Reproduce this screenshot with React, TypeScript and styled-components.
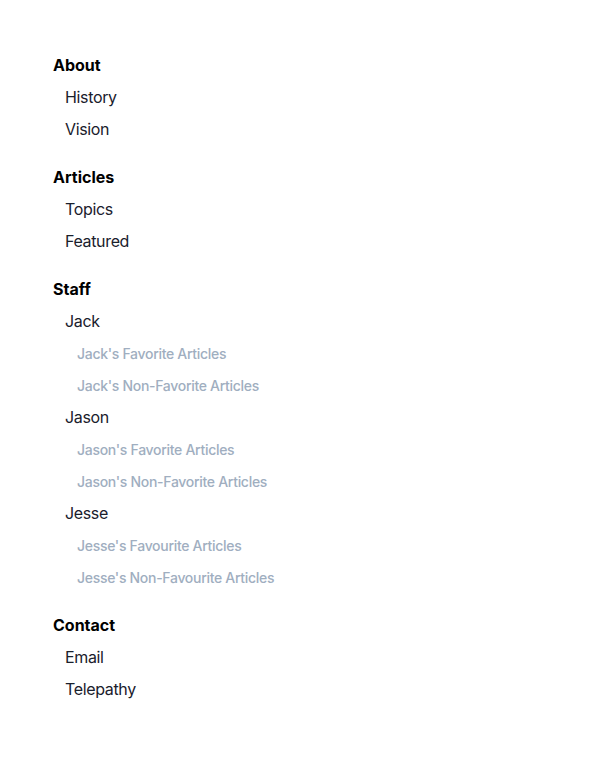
import React from "react";
import styled, { createGlobalStyle } from "styled-components";

const Global = createGlobalStyle`
  html, body { margin: 0; padding: 0; background: #fff; }
  body { font-family: Inter, "Noto Sans", sans-serif; -webkit-font-smoothing: antialiased; }
`;

const Nav = styled.nav`
  padding: 49px 53px;
  display: flex;
  flex-direction: column;
  gap: 16px;
`;

const Section = styled.div`
  display: flex;
  flex-direction: column;
`;

const Heading = styled.div`
  font-size: 16px;
  font-weight: 700;
  line-height: 32px;
  color: #000;
`;

const Item = styled.div<{ $level: number }>`
  padding-left: ${(p) => (p.$level === 1 ? 12 : 24)}px;
  padding-top: ${(p) => (p.$level === 1 ? 0 : 2)}px;
  font-size: ${(p) => (p.$level === 1 ? 16 : 14)}px;
  line-height: ${(p) => (p.$level === 1 ? 32 : 30)}px;
  letter-spacing: ${(p) => (p.$level === 1 ? -0.35 : -0.3)}px;
  color: ${(p) => (p.$level === 1 ? "#1a202c" : "#a0aec0")};
  font-weight: ${(p) => (p.$level === 1 ? 400 : 500)};
`;

type Entry = { label: string; children?: string[] };
const data: { title: string; items: Entry[] }[] = [
  { title: "About", items: [{ label: "History" }, { label: "Vision" }] },
  { title: "Articles", items: [{ label: "Topics" }, { label: "Featured" }] },
  {
    title: "Staff",
    items: [
      { label: "Jack", children: ["Jack's Favorite Articles", "Jack's Non-Favorite Articles"] },
      { label: "Jason", children: ["Jason's Favorite Articles", "Jason's Non-Favorite Articles"] },
      { label: "Jesse", children: ["Jesse's Favourite Articles", "Jesse's Non-Favourite Articles"] },
    ],
  },
  { title: "Contact", items: [{ label: "Email" }, { label: "Telepathy" }] },
];

export default function App() {
  return (
    <>
      <Global />
      <Nav>
        {data.map((s) => (
          <Section key={s.title}>
            <Heading>{s.title}</Heading>
            {s.items.map((it) => (
              <React.Fragment key={it.label}>
                <Item $level={1}>{it.label}</Item>
                {it.children?.map((c) => (
                  <Item $level={2} key={c}>{c}</Item>
                ))}
              </React.Fragment>
            ))}
          </Section>
        ))}
      </Nav>
    </>
  );
}
